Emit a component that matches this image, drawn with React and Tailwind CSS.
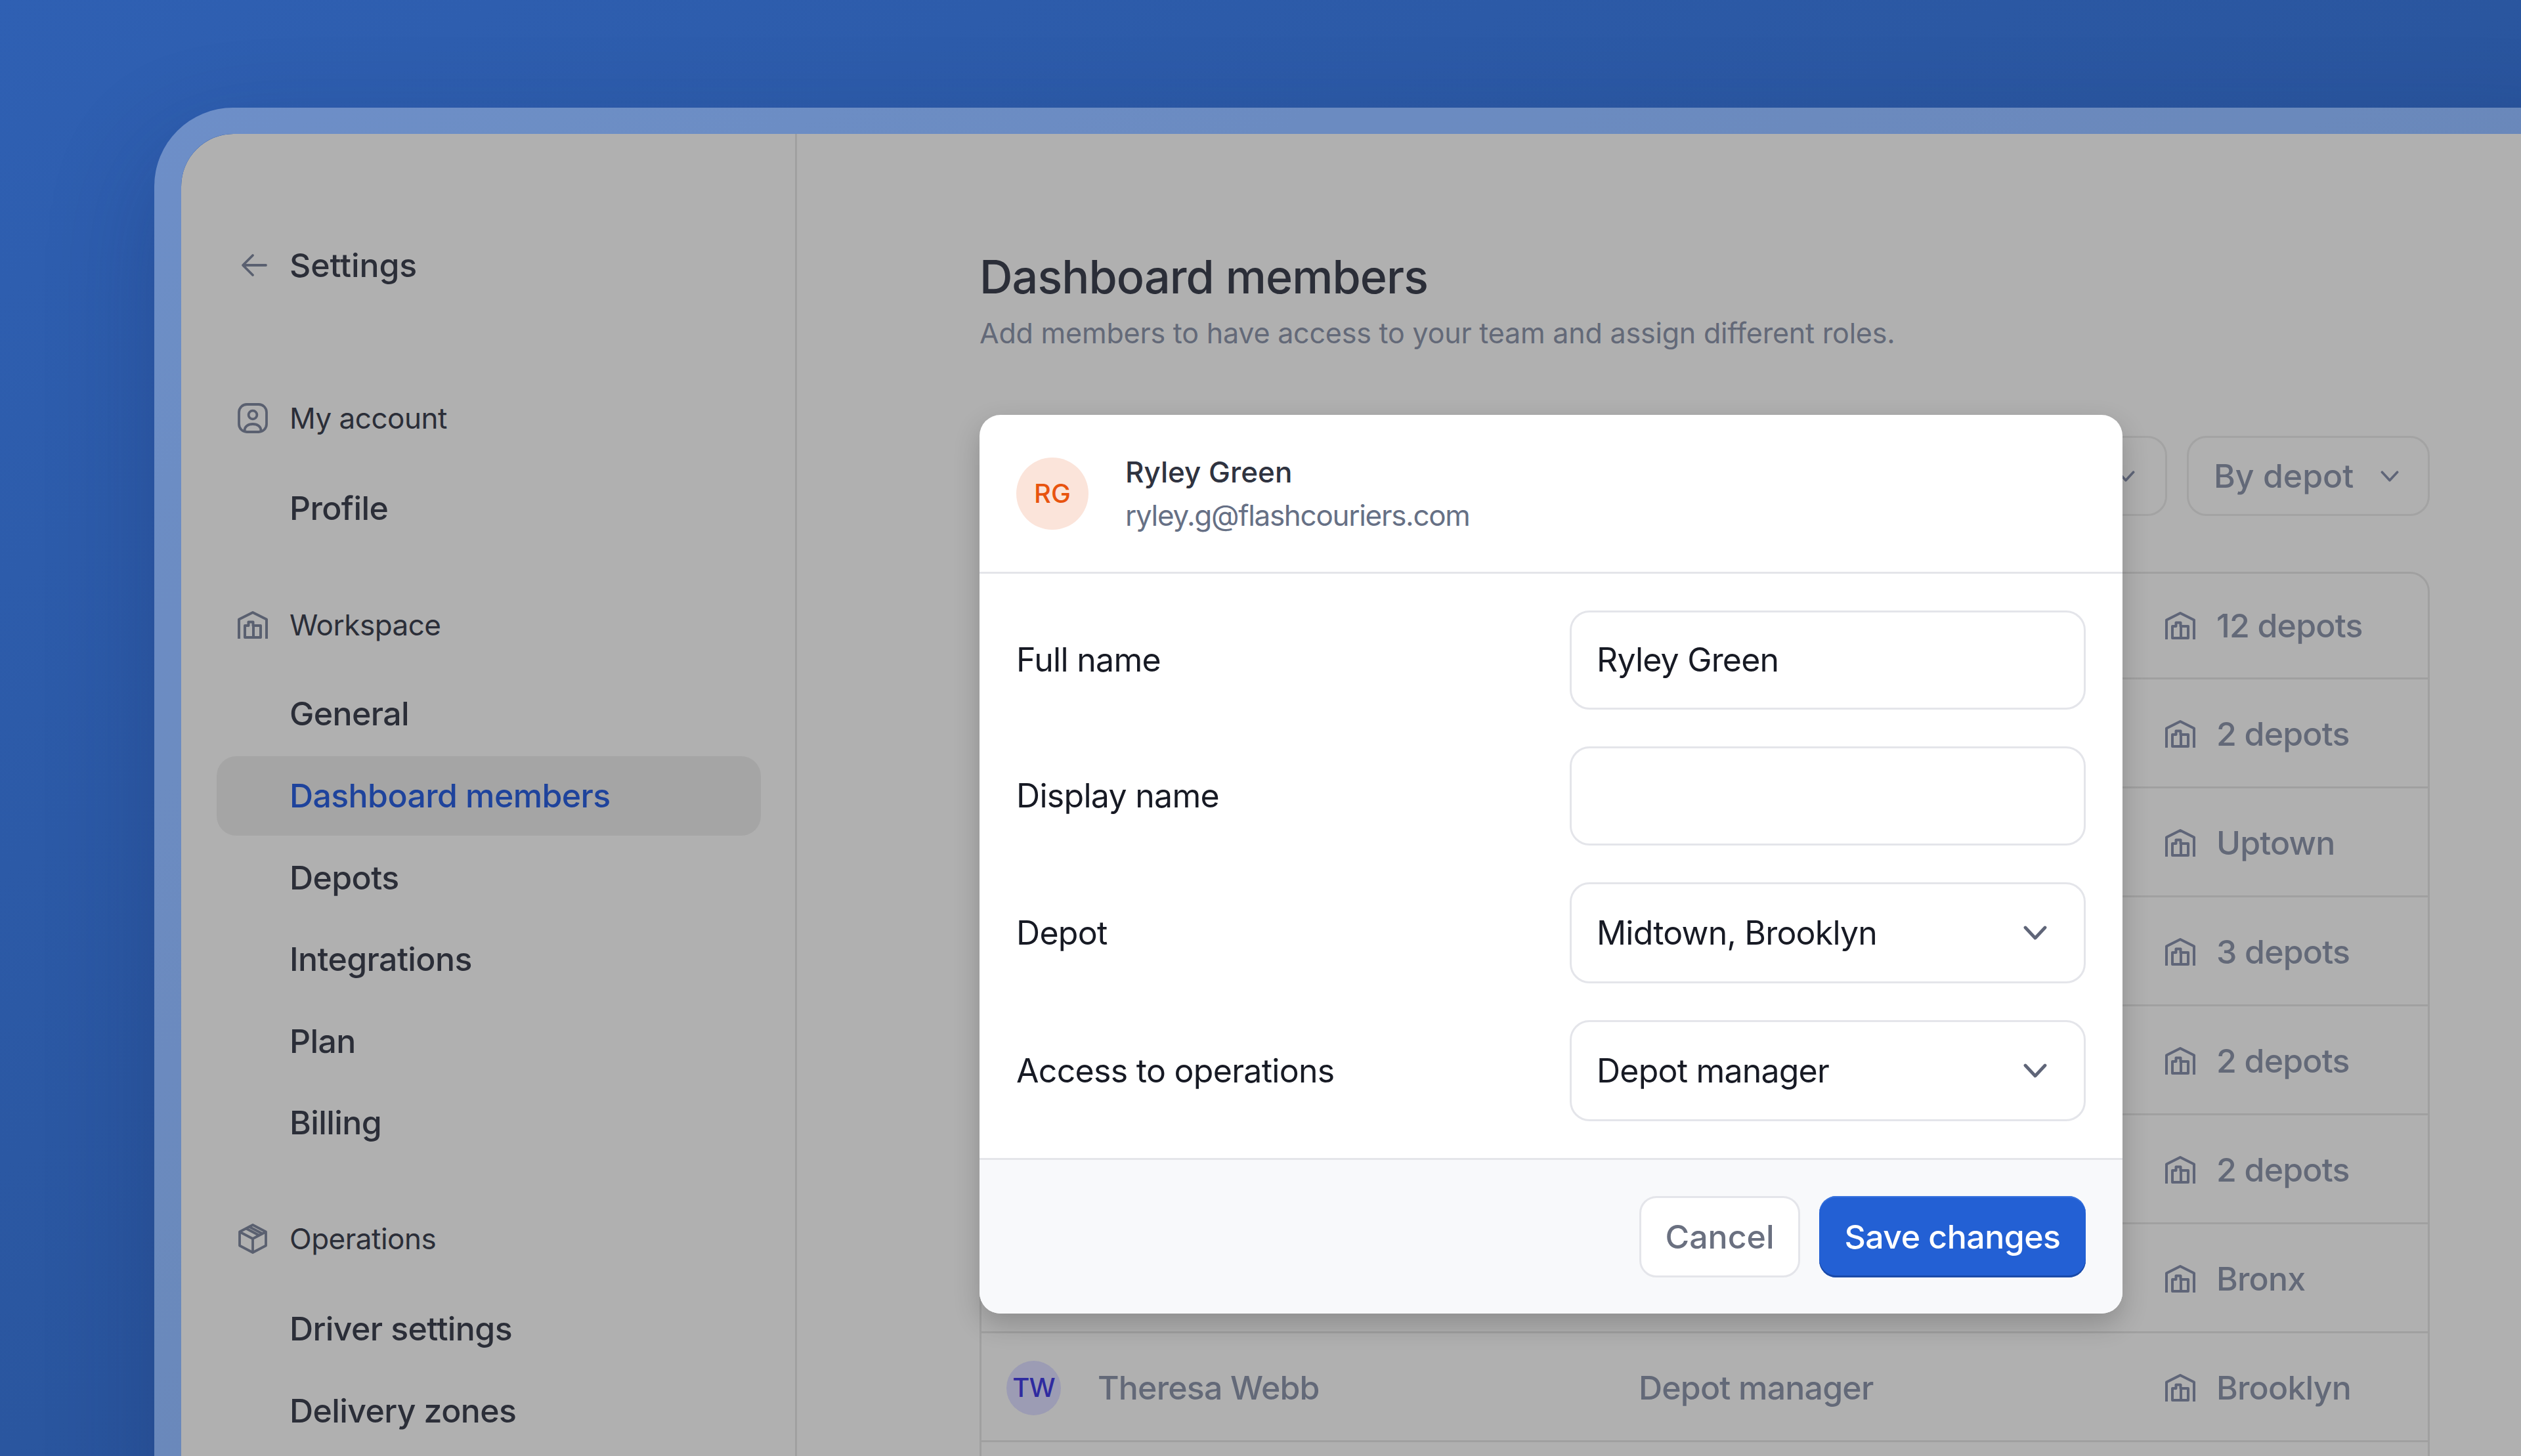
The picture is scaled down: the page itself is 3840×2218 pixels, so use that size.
const Building = ({ className = "" }) => (
  <svg className={className} viewBox="0 0 46 42" fill="none" stroke="currentColor" strokeWidth="4" strokeLinejoin="round">
    <path d="M2 42V12.5L23 2l21 10.5V42" />
    <path d="M11 40V22h5.5v-5.5h7V22H35v18H11Z" />
    <path d="M24 22v18" />
  </svg>
);

const UserSquare = () => (
  <svg className="w-[46px] h-[46px] shrink-0 text-[#5a6070]" viewBox="0 0 46 46" fill="none" stroke="currentColor" strokeWidth="3.8">
    <rect x="2" y="2" width="42" height="42" rx="12" />
    <circle cx="23" cy="18" r="6.4" />
    <path d="M10.5 42c0-6 5-10 12.5-10s12.5 4 12.5 10" />
  </svg>
);

const Box = () => (
  <svg className="w-[46px] h-[46px] shrink-0 text-[#5a6070]" viewBox="0 0 46 46" fill="none" stroke="currentColor" strokeWidth="3.8" strokeLinejoin="round">
    <path d="M23 2 43 12.5v21L23 44 3 33.5v-21L23 2Z" />
    <path d="M3 12.5 23 23l20-10.5M23 23v21" />
    <path d="M13 7.5 33 18M18 5l20 10.5" />
  </svg>
);

const ArrowBack = () => (
  <svg className="w-[46px] h-[36px] shrink-0 text-[#5a6070]" viewBox="0 0 46 36" fill="none" stroke="currentColor" strokeWidth="3.8" strokeLinecap="round" strokeLinejoin="round">
    <path d="M40 18H7M20 3 5 18l15 15" />
  </svg>
);

const Chevron = ({ className = "" }) => (
  <svg className={className} viewBox="0 0 36 22" fill="none" stroke="currentColor" strokeWidth="4.8" strokeLinecap="round" strokeLinejoin="round">
    <path d="M3 3l15 16L33 3" />
  </svg>
);

const Section = ({ icon, label }) => (
  <div className="h-[60px] pl-[86px] flex items-center gap-[33px] text-[44px] tracking-[-0.5px] text-[#2b2e38]">
    {icon}
    <span>{label}</span>
  </div>
);

const NavItem = ({ label, active }) => (
  <div className="h-[124.6px] pl-[54px] pr-[52px] flex items-center">
    <div
      className={`w-full h-[121px] pl-[111px] flex items-center rounded-[30px] text-[50px] tracking-[-0.6px] font-medium ${
        active ? "bg-[#a5a5a5] text-[#1e439c]" : "text-[#2b2e38]"
      }`}
    >
      {label}
    </div>
  </div>
);

const Field = ({ label, value, select, tall }) => (
  <div className="flex items-center justify-between">
    <span className="text-[50px] tracking-[-0.7px] text-[#171a24]">{label}</span>
    <div
      className={`w-[786px] ${tall ? "h-[154px]" : "h-[151px]"} pl-[38px] pr-[56px] flex items-center justify-between bg-white border-[3px] border-[#e4e5ea] rounded-[30px] text-[50px] tracking-[-0.8px] text-[#171a24]`}
    >
      <span>{value}</span>
      {select && <Chevron className="w-[36px] h-[22px] text-[#5f6578]" />}
    </div>
  </div>
);

const rows = [
  { depot: "12 depots" },
  { depot: "2 depots" },
  { depot: "Uptown" },
  { depot: "3 depots" },
  { depot: "2 depots" },
  { depot: "2 depots" },
  { depot: "Bronx" },
  { depot: "Brooklyn", name: "Theresa Webb", initials: "TW", role: "Depot manager" },
  {},
];

export default function App() {
  return (
    <div
      className="relative w-[3840px] h-[2218px] overflow-hidden pl-[235px] pt-[164px] bg-[linear-gradient(150deg,#2f60b3_0%,#2a569f_50%,#264a8e_100%)]"
      style={{ fontFamily: "Inter, sans-serif" }}
    >
      <div className="w-[3700px] h-[2200px] border-l-[41px] border-t-[40px] border-white/30 rounded-tl-[120px] overflow-hidden shadow-[0_60px_160px_rgba(20,30,80,0.25)]">
        <div className="flex h-full bg-[#b0b0b0] rounded-tl-[80px]">
          {/* sidebar */}
          <div className="w-[938px] shrink-0 border-r-[3px] border-[#a0a0a0] pt-[170px]">
            <div className="h-[60px] pl-[89px] flex items-center gap-[30px] text-[50px] tracking-[-0.1px] font-medium text-[#2b2e38]">
              <ArrowBack />
              <span>Settings</span>
            </div>
            <div className="mt-[173px]">
              <Section icon={<UserSquare />} label="My account" />
            </div>
            <div className="mt-[45px]">
              <NavItem label="Profile" />
            </div>
            <div className="mt-[85px]">
              <Section icon={<Building className="w-[46px] h-[42px] shrink-0 text-[#5a6070]" />} label="Workspace" />
            </div>
            <div className="mt-[44px]">
              <NavItem label="General" />
              <NavItem label="Dashboard members" active />
              <NavItem label="Depots" />
              <NavItem label="Integrations" />
              <NavItem label="Plan" />
              <NavItem label="Billing" />
            </div>
            <div className="mt-[84px]">
              <Section icon={<Box />} label="Operations" />
            </div>
            <div className="mt-[45px]">
              <NavItem label="Driver settings" />
              <NavItem label="Delivery zones" />
            </div>
          </div>

          {/* main */}
          <div className="pl-[278px] pt-[172px]">
            <div className="w-[2209px]">
              <h1 className="h-[90px] flex items-center text-[70px] tracking-[-0.9px] font-medium text-[#2b2e38]">Dashboard members</h1>
              <p className="mt-[11px] h-[60px] flex items-center text-[43px] tracking-[-0.2px] text-[#636978]">
                Add members to have access to your team and assign different roles.
              </p>
              <div className="mt-[127px] flex justify-end gap-[30px]">
                <div className="w-[300px] h-[122px] pr-[46px] flex items-center justify-end border-[3px] border-[#a3a3a3] rounded-[30px]">
                  <Chevron className="w-[28px] h-[17px] text-[#5f6578]" />
                </div>
                <div className="w-[370px] h-[122px] pl-[38px] pr-[44px] flex items-center justify-between border-[3px] border-[#a3a3a3] rounded-[30px] text-[50px] font-medium text-[#636978]">
                  <span>By depot</span>
                  <Chevron className="w-[28px] h-[17px] text-[#5f6578]" />
                </div>
              </div>
              <div className="mt-[85px] border-[3px] border-[#a0a0a0] rounded-t-[30px]">
                {rows.map((row, i) => (
                  <div
                    key={i}
                    className={`${i === 0 ? "h-[161px]" : "h-[166px] pt-[3px]"} flex items-center border-b-[3px] border-[#a0a0a0] text-[50px] tracking-[-0.8px] text-[#636978]`}
                  >
                    <div className="w-[1001px] pl-[38px] flex items-center gap-[56px] font-medium">
                      {row.initials && (
                        <div className="w-[83px] h-[83px] rounded-full bg-[#9c9cb4] flex items-center justify-center text-[40px] text-[#2f2ba0]">
                          {row.initials}
                        </div>
                      )}
                      <span>{row.name}</span>
                    </div>
                    <div className="w-[802px] font-medium">{row.role}</div>
                    {row.depot && (
                      <div className="flex items-center gap-[32px] font-medium">
                        <Building className="w-[46px] h-[42px] shrink-0 text-[#5f6578]" />
                        <span>{row.depot}</span>
                      </div>
                    )}
                  </div>
                ))}
              </div>
            </div>
          </div>
        </div>
      </div>

      {/* edit member modal */}
      <div className="absolute left-[1492px] top-[632px] w-[1741px] h-[1369px] flex flex-col bg-white rounded-[32px] overflow-hidden shadow-[0_16px_40px_rgba(0,0,0,0.2)]">
        <div className="h-[242px] shrink-0 px-[56px] flex items-center gap-[56px] border-b-[3px] border-[#e4e5ea]">
          <div className="w-[110px] h-[110px] rounded-full bg-[#fbe4da] flex items-center justify-center text-[40px] font-medium text-[#e8540f]">
            RG
          </div>
          <div className="flex flex-col">
            <span className="h-[66px] flex items-center text-[44px] font-medium text-[#2f3340]">Ryley Green</span>
            <span className="h-[66px] flex items-center text-[44px] tracking-[-1.3px] text-[#667085]">ryley.g@flashcouriers.com</span>
          </div>
        </div>
        <div className="flex-1 pr-[56px] pl-[56px] pt-[56px] flex flex-col gap-[56px]">
          <Field label="Full name" value="Ryley Green" />
          <Field label="Display name" value="" />
          <Field label="Depot" value="Midtown, Brooklyn" select tall />
          <Field label="Access to operations" value="Depot manager" select tall />
        </div>
        <div className="h-[237px] shrink-0 pt-[55px] pr-[56px] flex justify-end gap-[29px] bg-[#f8f9fb] border-t-[3px] border-[#e4e5ea]">
          <div className="w-[245px] h-[124px] flex items-center justify-center bg-white border-[3px] border-[#e4e5ea] rounded-[26px] text-[50px] font-medium text-[#6a7080]">
            Cancel
          </div>
          <div className="w-[406px] h-[124px] flex items-center justify-center bg-[#2360d4] rounded-[26px] text-[50px] tracking-[-0.5px] font-medium text-white shadow-[inset_0_-3px_0_#1a4aa8,inset_0_2px_0_#3a74de]">
            Save changes
          </div>
        </div>
      </div>
    </div>
  );
}
